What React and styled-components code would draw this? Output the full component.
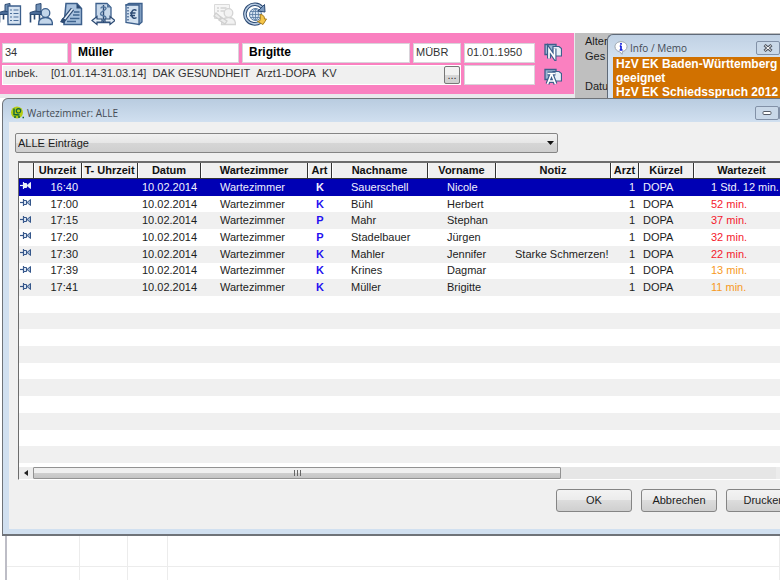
import {useState} from 'react';
import styled, {createGlobalStyle} from 'styled-components';

const entries = [
	{time: '16:40', type: 'K', last: 'Sauerschell', first: 'Nicole', note: '', wait: '1 Std. 12 min.', level: 'high'},
	{time: '17:00', type: 'K', last: 'Bühl', first: 'Herbert', note: '', wait: '52 min.', level: 'high'},
	{time: '17:15', type: 'P', last: 'Mahr', first: 'Stephan', note: '', wait: '37 min.', level: 'high'},
	{time: '17:20', type: 'P', last: 'Stadelbauer', first: 'Jürgen', note: '', wait: '32 min.', level: 'high'},
	{time: '17:30', type: 'K', last: 'Mahler', first: 'Jennifer', note: 'Starke Schmerzen!', wait: '22 min.', level: 'high'},
	{time: '17:39', type: 'K', last: 'Krines', first: 'Dagmar', note: '', wait: '13 min.', level: 'medium'},
	{time: '17:41', type: 'K', last: 'Müller', first: 'Brigitte', note: '', wait: '11 min.', level: 'medium'},
];

const columns = [
	{title: '', width: 15},
	{title: 'Uhrzeit', width: 48},
	{title: 'T- Uhrzeit', width: 56},
	{title: 'Datum', width: 63},
	{title: 'Wartezimmer', width: 107},
	{title: 'Art', width: 24},
	{title: 'Nachname', width: 96},
	{title: 'Vorname', width: 68},
	{title: 'Notiz', width: 115},
	{title: 'Arzt', width: 28},
	{title: 'Kürzel', width: 55},
	{title: 'Wartezeit'},
];

const ROW_COUNT = 17;
const emptyRows = Array.from({length: ROW_COUNT - entries.length}, (_, index) => index);
const waitColors = {high: '#f5192d', medium: '#f79a1e'};

function Chair() {
	return (
		<g>
			<path d="M7 2.5 12 1.5v8L7 10z" fill="#6f8fb5" stroke="#2c4a73" />
			<path d="M1 10.5 6 9l6 1v2.5H1z" fill="#4a6b97" stroke="#2c4a73" />
			<path d="M1.5 12.500v8M5.500 12.500v5M10.500 12.500v8" stroke="#2c4a73" strokeWidth="1.600" />
		</g>
	);
}

function Person({fill = '#c3d6ea', stroke = '#3c5f8c'}) {
	return (
		<g fill={fill} stroke={stroke} strokeWidth="1.300">
			<path d="M9.500 22.500c0-5 2.500-7 7-7s7 2 7 7z" />
			<circle cx="16.500" cy="11" r="4.300" />
		</g>
	);
}

function ListIcon() {
	return (
		<svg width="24" height="24" viewBox="0 0 24 24" fill="none" aria-hidden="true">
			<Chair />
			<path d="M10 4h12.500v18.500H10z" fill="#d6e3f1" stroke="#3c5f8c" strokeWidth="1.300" />
			<path d="M12 8h2m1.500 0h5M12 11.500h2m1.500 0h5M12 15h2m1.500 0h5M12 18.500h2m1.500 0h5" stroke="#4b6f9b" strokeWidth="1.200" />
		</svg>
	);
}

function PatientIcon() {
	return (
		<svg width="24" height="24" viewBox="0 0 24 24" fill="none" aria-hidden="true">
			<Chair />
			<Person />
		</svg>
	);
}

function EditIcon() {
	return (
		<svg width="24" height="24" viewBox="0 0 24 24" fill="none" aria-hidden="true">
			<path d="M6 1.500h11l4.500 5v16H4z" fill="#a9c2de" stroke="#3c5f8c" strokeWidth="1.500" />
			<path d="M16.500 1.500v5h5z" fill="#2c4a73" />
			<path d="M14 10h5.500M13 13h6.500M10 16.500h9.500M7 19.500h9" stroke="#3f648f" strokeWidth="1.300" />
			<path d="m3 19 9.500-12" stroke="#2c4a73" strokeWidth="4" />
			<path d="m3.500 18.500 9-11.500" stroke="#e7eff8" strokeWidth="1.600" />
			<path d="m0 20 4 1.500 1.500-4-3-1.500z" fill="#2c4a73" />
		</svg>
	);
}

function MedicalIcon() {
	return (
		<svg width="24" height="24" viewBox="0 0 24 24" fill="none" aria-hidden="true">
			<path d="M5 1.500h11l4 4v15H5z" fill="#c7d8ea" stroke="#3c5f8c" strokeWidth="1.300" />
			<path d="M16 1.500v4h4z" fill="#55779f" />
			<path d="M12.500 3v18" stroke="#2c4a73" strokeWidth="1.400" />
			<path d="M10 6.500c0-2.500 5.500-2 5 .2s-5.500 2.300-5.500 5 5.500 1.500 5.500 4-2.500 2-3.500 3" stroke="#54779f" strokeWidth="1.400" />
			<path d="m1 18.500 5-4v2.500h5v3H6v2.500zM24 18.500l-5-4v2.500h-5v3h5v2.500z" fill="#e4edf7" stroke="#2c4a73" strokeWidth="1.200" />
		</svg>
	);
}

function EuroIcon() {
	return (
		<svg width="24" height="24" viewBox="0 0 24 24" fill="none" aria-hidden="true">
			<path d="m4 3 3-1.500h13V20l-3 2.500z" fill="#7f9dc0" stroke="#3c5f8c" strokeWidth="1.300" />
			<path d="M4 3h13v19.500L4 20.500z" fill="#d3e1f0" stroke="#3c5f8c" strokeWidth="1.300" />
			<path d="M6 5v14" stroke="#3c5f8c" strokeWidth="1.400" strokeDasharray="1.500 1.500" />
			<path d="M14.500 8.500c-2.500-2-5 0-5 3.500s2.500 5.500 5 3.500M8 11h5.500M8 13.500h5" stroke="#2c4a73" strokeWidth="1.500" />
		</svg>
	);
}

function InactiveIcon() {
	return (
		<svg width="24" height="24" viewBox="0 0 24 24" fill="none" aria-hidden="true">
			<path d="M2.500 2.500h15v14h-15z" fill="#f6f6f6" stroke="#dadada" />
			<path d="M5 6h2m1.500 0h6M5 9h2m1.500 0h4" stroke="#d4d4d4" strokeWidth="1.300" />
			<Person fill="#f2f2f2" stroke="#d4d4d4" />
			<path d="m4 11 6 5-2 2-6-4zM9 15l6 4-2 3-6-4z" fill="#ececec" stroke="#d0d0d0" strokeWidth="1.300" />
		</svg>
	);
}

function GlobeIcon() {
	return (
		<svg width="24" height="24" viewBox="0 0 24 24" fill="none" aria-hidden="true">
			<path d="M19 5.500A9.800 9.800 0 1 0 17.500 20" stroke="#2c4a73" strokeWidth="3.600" />
			<path d="M19 5.500A9.800 9.800 0 1 0 17.500 20" stroke="#b8cce3" strokeWidth="1.600" />
			<circle cx="12.500" cy="12.500" r="6" fill="#d5e4f3" stroke="#54779f" />
			<path d="M6.500 12.500h12M7.500 9.500h10M7.500 15.500h10M12.500 6.500v12M12.500 6.500c-4 3-4 9 0 12M12.500 6.500c4 3 4 9 0 12" stroke="#54779f" strokeWidth=".8" />
			<path d="m21.500 2.500.5 7.500-7-1z" fill="#7c9bc0" stroke="#2c4a73" />
			<path d="M17 12.500c3 0 4.500 1.500 4.500 4.500h2l-3.500 5.500-5.500-3 2.500-.8c.5-2 .5-4 0-6.200z" fill="#f6c64a" stroke="#a87d1f" />
		</svg>
	);
}

function CardIcon({shape}) {
	return (
		<svg width="18" height="18" viewBox="0 0 18 18" fill="none" aria-hidden="true">
			<path d="M1 1.500h11v10H1z" fill="#9bb6d3" stroke="#3c5f8c" strokeWidth="1.300" />
			<path d="M9 3.500h6l2.500 2v7.500H9z" fill="#e8f0f8" stroke="#3c5f8c" strokeWidth="1.200" />
			<path d={shape} stroke="#3c5f8c" strokeWidth="4" />
			<path d={shape} stroke="#fff" strokeWidth="1.700" />
		</svg>
	);
}

function PinIcon({selected}) {
	const color = selected ? '#e8eef8' : '#34568a';
	return (
		<svg width="12" height="9" viewBox="0 0 12 9" fill="none" aria-hidden="true">
			<path d="M0 4.500h3" stroke={color} strokeWidth="1.200" />
			<path d="M3.500 1v7" stroke={color} strokeWidth="1.200" />
			<path d="M3.500 2.500h3v4h-3z" fill={selected ? color : '#dbe5f2'} stroke={color} />
			<path d="m7 4.500 3.500-3v6z" fill={selected ? color : '#9db3d0'} stroke={color} />
		</svg>
	);
}

function AppIcon() {
	return (
		<svg width="14" height="14" viewBox="0 0 14 14" fill="none" aria-hidden="true">
			<circle cx="6" cy="6.500" r="6" fill="#b5cc12" />
			<path d="M3 2.500v6l5.500.5" stroke="#12663f" strokeWidth="1.400" />
			<circle cx="7.500" cy="4.800" r="2.200" stroke="#12663f" strokeWidth="1.200" />
			<circle cx="4" cy="11" r="1" fill="#12663f" />
			<circle cx="8" cy="11" r="1" fill="#12663f" />
			<path d="M11.500 11.500H13" stroke="#12663f" strokeWidth="1.500" />
		</svg>
	);
}

function MemoIcon() {
	return (
		<svg width="14" height="14" viewBox="0 0 14 14" fill="none" aria-hidden="true">
			<path d="M7 .7c3.600 0 6 2.200 6 5 0 2.600-2 4.300-4.500 4.800L8 13.300 5.500 10.600C3 10.200 1 8.300 1 5.700c0-2.800 2.400-5 6-5z" fill="#fff" stroke="#9aa3ad" />
			<path d="M7 2v1.800M7 4.800v4.400M5.800 5.200H7M5.600 9h3" stroke="#1522dd" strokeWidth="1.700" />
		</svg>
	);
}

export default function App() {
	const [selectedRow, setSelectedRow] = useState(0);

	return (
		<>
			<GlobalStyle />
			<Desktop>
				<Toolbar aria-label="Werkzeuge">
					<ToolButton type="button" aria-label="Wartezimmerliste"><ListIcon /></ToolButton>
					<ToolButton type="button" aria-label="Patient"><PatientIcon /></ToolButton>
					<ToolButton type="button" aria-label="Bearbeiten"><EditIcon /></ToolButton>
					<ToolButton type="button" aria-label="Überweisung"><MedicalIcon /></ToolButton>
					<ToolButton type="button" aria-label="Abrechnung"><EuroIcon /></ToolButton>
					<ToolGap />
					<ToolButton type="button" aria-label="Akte" disabled><InactiveIcon /></ToolButton>
					<ToolButton type="button" aria-label="Online"><GlobeIcon /></ToolButton>
				</Toolbar>

				<PatientArea>
					<PatientBar>
						<PatientGrid>
							<Field aria-label="Nummer" defaultValue="34" />
							<Field aria-label="Nachname" defaultValue="Müller" $strong />
							<Field aria-label="Vorname" defaultValue="Brigitte" $strong />
							<Field aria-label="Kürzel" defaultValue="MÜBR" />
							<Field aria-label="Geburtsdatum" defaultValue="01.01.1950" />
							<Insurance>
								<InsuranceState>unbek.</InsuranceState>
								<span>[01.01.14-31.03.14]</span>
								<span>DAK GESUNDHEIT</span>
								<span>Arzt1-DOPA</span>
								<span>KV</span>
								<MoreButton type="button">...</MoreButton>
							</Insurance>
							<Field aria-label="Zusatz" />
						</PatientGrid>
						<CardButtons>
							<CardButton type="button" aria-label="Neu"><CardIcon shape="M5 15.500V6.500l5.500 8V5.500" /></CardButton>
							<CardButton type="button" aria-label="Akte"><CardIcon shape="M3.500 16 7 7h1l3.500 9M5 13h5M3.500 5.500h8" /></CardButton>
						</CardButtons>
					</PatientBar>
					<Details>
						<p>Alter</p>
						<p>Ges</p>
						<DetailSpaced>Datu</DetailSpaced>
					</Details>
					<MemoWindow>
						<MemoTitle>
							<MemoIcon />
							<TitleText>Info / Memo</TitleText>
							<CaptionButton type="button" aria-label="Schließen">
								<svg width="10" height="8" viewBox="0 0 10 8" aria-hidden="true">
									<path d="m1.500 1 7 6m0-6-7 6" stroke="#555b66" strokeWidth="3" />
									<path d="m2 1.500 6 5m0-5-6 5" stroke="#fff" strokeWidth="1" />
								</svg>
							</CaptionButton>
						</MemoTitle>
						<MemoText>
							HzV EK Baden-Württemberg
							<br />
							geeignet
							<br />
							HzV EK Schiedsspruch 2012
						</MemoText>
					</MemoWindow>
				</PatientArea>

				<WaitingWindow>
					<WindowTitle>
						<AppIcon />
						<TitleText>Wartezimmer: ALLE</TitleText>
						<CaptionButton type="button" aria-label="Minimieren">
							<svg width="10" height="6" viewBox="0 0 10 6" aria-hidden="true">
								<rect x="1" y="1.500" width="8" height="3" rx="1" fill="#fff" stroke="#555b66" />
							</svg>
						</CaptionButton>
						<CaptionButton type="button" aria-label="Fenster schließen" $wide />
					</WindowTitle>
					<WindowBody>
						<SelectBox>
							<Select aria-label="Einträge" defaultValue="all">
								<option value="all">ALLE Einträge</option>
							</Select>
							<svg width="7" height="4" viewBox="0 0 7 4" aria-hidden="true">
								<path d="M0 0h7L3.500 4z" fill="#111" />
							</svg>
						</SelectBox>

						<TableFrame>
							<Table>
								<colgroup>
									{columns.map(column => (
										<Col key={column.title} $width={column.width} />
									))}
								</colgroup>
								<thead>
									<tr>
										{columns.map(column => (
											<HeadCell key={column.title} scope="col">{column.title}</HeadCell>
										))}
									</tr>
								</thead>
								<tbody>
									{entries.map((entry, index) => (
										<Row key={entry.time} $selected={index === selectedRow} onClick={() => setSelectedRow(index)}>
											<PinCell><PinIcon selected={index === selectedRow} /></PinCell>
											<Cell $align="right">{entry.time}</Cell>
											<Cell />
											<Cell $align="center">10.02.2014</Cell>
											<Cell $indent>Wartezimmer</Cell>
											<TypeCell $align="center" $selected={index === selectedRow}>{entry.type}</TypeCell>
											<Cell $indent>{entry.last}</Cell>
											<Cell $indent>{entry.first}</Cell>
											<Cell $indent>{entry.note}</Cell>
											<Cell $align="right">1</Cell>
											<Cell>DOPA</Cell>
											<WaitCell $level={entry.level} $selected={index === selectedRow}>{entry.wait}</WaitCell>
										</Row>
									))}
									{emptyRows.map(row => (
										<Row key={row}>
											<Cell colSpan={columns.length}>&nbsp;</Cell>
										</Row>
									))}
								</tbody>
							</Table>
							<ScrollBar>
								<ScrollButton type="button" aria-label="Nach links">
									<svg width="4" height="6" viewBox="0 0 4 6" aria-hidden="true"><path d="M4 0v6L0 3z" fill="#222" /></svg>
								</ScrollButton>
								<ScrollTrack>
									<ScrollThumb>
										<svg width="8" height="6" viewBox="0 0 8 6" aria-hidden="true"><path d="M1.500 0v6M4.500 0v6M7.500 0v6" stroke="#666" /></svg>
									</ScrollThumb>
								</ScrollTrack>
								<ScrollButton type="button" aria-label="Nach rechts">
									<svg width="4" height="6" viewBox="0 0 4 6" aria-hidden="true"><path d="M0 0v6l4-3z" fill="#222" /></svg>
								</ScrollButton>
							</ScrollBar>
						</TableFrame>

						<Actions>
							<ActionButton type="button">OK</ActionButton>
							<ActionButton type="button">Abbrechen</ActionButton>
							<ActionButton type="button">Drucken</ActionButton>
						</Actions>
					</WindowBody>
				</WaitingWindow>

				<Sheet>
					<SheetCell /><SheetCell /><SheetCell /><SheetCell />
					<SheetCell /><SheetCell /><SheetCell /><SheetCell />
				</Sheet>
			</Desktop>
		</>
	);
}

const GlobalStyle = createGlobalStyle`
	*, *::before, *::after {
		box-sizing: border-box;
	}
	body {
		margin: 0;
		background: #fff;
		color: #1c1c1c;
		font: 11px/15px 'Liberation Sans', Arial, sans-serif;
	}
	p {
		margin: 0;
	}
	button, input, select {
		margin: 0;
		color: inherit;
		font: inherit;
	}
	svg {
		display: block;
		flex: none;
	}
`;

const Desktop = styled.main`
	display: flex;
	flex-direction: column;
	min-height: 100vh;
	overflow: hidden;
`;

const Toolbar = styled.nav`
	display: flex;
	height: 33px;
	padding-top: 2px;
`;

const ToolButton = styled.button`
	width: 24px;
	height: 24px;
	margin-right: 7px;
	padding: 0;
	border: none;
	background: transparent;
	&:first-child {
		margin-left: -2px;
	}
`;

const ToolGap = styled.span`
	width: 59px;
`;

const PatientArea = styled.section`
	display: flex;
	position: relative;
	height: 65px;
	background: #e9e9ec;
`;

const PatientBar = styled.div`
	display: flex;
	gap: 9px;
	width: 574px;
	height: 61px;
	padding: 10px 2px;
	background: #fa80c0;
`;

const PatientGrid = styled.div`
	display: grid;
	grid-template-columns: 66px 168px 168px 48px 71px;
	grid-template-rows: 20px 20px;
	gap: 2px 3px;
`;

const Field = styled.input`
	min-width: 0;
	height: 20px;
	padding: 0 ${({$strong}) => ($strong ? '6px' : '2px')} 2px;
	border: 1px solid #d9d3da;
	border-radius: 0;
	background: #fff;
	color: ${({$strong}) => ($strong ? '#000' : '#333')};
	font-size: ${({$strong}) => ($strong ? '12px' : '11px')};
	font-weight: ${({$strong}) => ($strong ? 'bold' : 'normal')};
`;

const Insurance = styled.div`
	display: flex;
	grid-column: span 4;
	align-items: center;
	gap: 6px;
	height: 20px;
	padding-left: 2px;
	border: 1px solid #fff;
	background: #f0f0f0;
	color: #333;
	line-height: 13px;
	white-space: nowrap;
	& > span {
		padding-bottom: 3px;
	}
`;

const InsuranceState = styled.span`
	width: 40px;
`;

const MoreButton = styled.button`
	width: 16px;
	height: 18px;
	margin-left: auto;
	padding: 0;
	border: 1px solid #777;
	border-radius: 2px;
	background: linear-gradient(#f2f2f2 50%, #d8d8d8 50%, #cfcfcf);
`;

const CardButtons = styled.div`
	display: flex;
	flex-direction: column;
	gap: 7px;
`;

const CardButton = styled.button`
	padding: 0;
	border: none;
	background: transparent;
`;

const Details = styled.div`
	flex: 1;
	margin-left: 1px;
	padding: 1px 10px;
	background: #bfbfbf;
`;

const DetailSpaced = styled.p`
	padding-top: 15px;
`;

/* floats over the patient details */
const MemoWindow = styled.aside`
	position: absolute;
	top: 1px;
	right: 0;
	bottom: 0;
	left: 607px;
	overflow: hidden;
	padding-left: 5px;
	border: solid #5f6a78;
	border-width: 1px 0 0 1px;
	border-radius: 6px 0 0;
	background: linear-gradient(#c0d1e4, #d3e1f0 24px);
`;

const MemoTitle = styled.header`
	display: flex;
	align-items: center;
	height: 22px;
	padding: 3px 0 0 1px;
`;

const TitleText = styled.h2`
	flex: 1;
	margin: 0 0 0 2px;
	color: #444b55;
	font: 10px/14px 'Open Sans', 'Noto Sans', sans-serif;
	white-space: nowrap;
`;

const CaptionButton = styled.button`
	display: flex;
	align-items: center;
	justify-content: center;
	width: ${({$wide}) => ($wide ? '29px' : '24px')};
	height: 14px;
	padding: 0;
	border: 1px solid #8291a7;
	border-radius: 2px;
	background: #c9d8e8;
`;

const MemoText = styled.p`
	padding: 0 3px;
	background: #d17100;
	color: #fff;
	font-size: 12px;
	font-weight: bold;
	line-height: 14px;
	white-space: nowrap;
`;

/* runs off the right edge of the desktop */
const WaitingWindow = styled.section`
	margin: 0 -35px 0 2px;
	padding: 0 6px 5px;
	border: 1px solid #6f7379;
	border-bottom-width: 2px;
	border-radius: 6px 6px 0 0;
	background: linear-gradient(#b9cce0, #d1e0f0 24px);
`;

const WindowTitle = styled.header`
	display: flex;
	align-items: center;
	height: 23px;
	padding: 4px 0 0 2px;
`;

const WindowBody = styled.div`
	padding: 11px 6px 17px;
	background: #f0f0f0;
`;

const SelectBox = styled.div`
	position: relative;
	width: 543px;
	& > svg {
		position: absolute;
		top: 8px;
		right: 4px;
		pointer-events: none;
	}
`;

const Select = styled.select`
	display: block;
	width: 100%;
	height: 20px;
	padding: 0 2px;
	border: 1px solid #858585;
	border-radius: 2px;
	background: linear-gradient(#f1f1f1, #e6e6e6 50%, #d6d6d6 50%, #cfcfcf);
	appearance: none;
`;

const TableFrame = styled.div`
	margin: 8px 12px 9px 3px;
	border: solid #6c6c6c;
	border-width: 2px 0 0 1px;
	border-bottom: 1px solid #fff;
	background: #fff;
`;

const Table = styled.table`
	width: 100%;
	height: 300px;
	border-collapse: separate;
	border-spacing: 0;
	table-layout: fixed;
	line-height: 15px;
`;

const Col = styled.col`
	width: ${({$width}) => ($width ? `${$width}px` : 'auto')};
`;

const HeadCell = styled.th`
	height: 16px;
	padding: 0;
	border-right: 1px solid #333;
	border-bottom: 1px solid #333;
	background: #f0f0f0;
	box-shadow: inset 1px 0 #fff;
	color: #111;
	white-space: nowrap;
`;

const Row = styled.tr`
	background: ${({$selected}) => ($selected ? '#0000b4' : '#fff')};
	color: ${({$selected}) => ($selected ? '#f0f0ff' : 'inherit')};
	&:nth-child(odd) {
		background: ${({$selected}) => ($selected ? '#0000b4' : '#f0f0f0')};
	}
`;

const Cell = styled.td`
	padding: 0 4px 0 ${({$indent}) => ($indent ? '19px' : '4px')};
	text-align: ${({$align}) => $align || 'left'};
	white-space: nowrap;
`;

const PinCell = styled(Cell)`
	padding: 0 1px;
	& > svg {
		margin-bottom: 3px;
	}
`;

const TypeCell = styled(Cell)`
	padding: 0;
	color: ${({$selected}) => ($selected ? 'inherit' : '#2410f0')};
	font-weight: bold;
`;

const WaitCell = styled(Cell)`
	padding: 0 0 0 17px;
	color: ${({$selected, $level}) => ($selected ? 'inherit' : waitColors[$level])};
`;

const ScrollBar = styled.div`
	display: flex;
	height: 16px;
	padding-top: 4px;
`;

const ScrollButton = styled.button`
	display: flex;
	align-items: center;
	justify-content: center;
	width: 14px;
	padding: 0;
	border: none;
	background: #ececec;
`;

const ScrollTrack = styled.div`
	flex: 1;
	background: #e6e6e6;
`;

const ScrollThumb = styled.div`
	display: flex;
	align-items: center;
	justify-content: center;
	width: 71%;
	height: 12px;
	border: 1px solid #929292;
	border-radius: 1px;
	background: linear-gradient(#efefef 50%, #cfcfcf 50%, #c4c4c4);
`;

const Actions = styled.div`
	display: flex;
	justify-content: flex-end;
	gap: 9px;
`;

const ActionButton = styled.button`
	width: 76px;
	height: 23px;
	padding: 0;
	border: 1px solid #858585;
	border-radius: 3px;
	background: linear-gradient(#f3f3f3, #ebebeb 50%, #dcdcdc 50%, #cfcfcf);
`;

const Sheet = styled.div`
	display: grid;
	flex: 1;
	grid-template-columns: 73px 48px 40px 1fr;
	grid-template-rows: 31px 1fr;
	min-height: 45px;
	margin-left: 5px;
	border-left: 2px solid #bdbdc6;
`;

const SheetCell = styled.div`
	border-right: 1px solid #ececec;
	border-bottom: 1px solid #ececec;
`;
